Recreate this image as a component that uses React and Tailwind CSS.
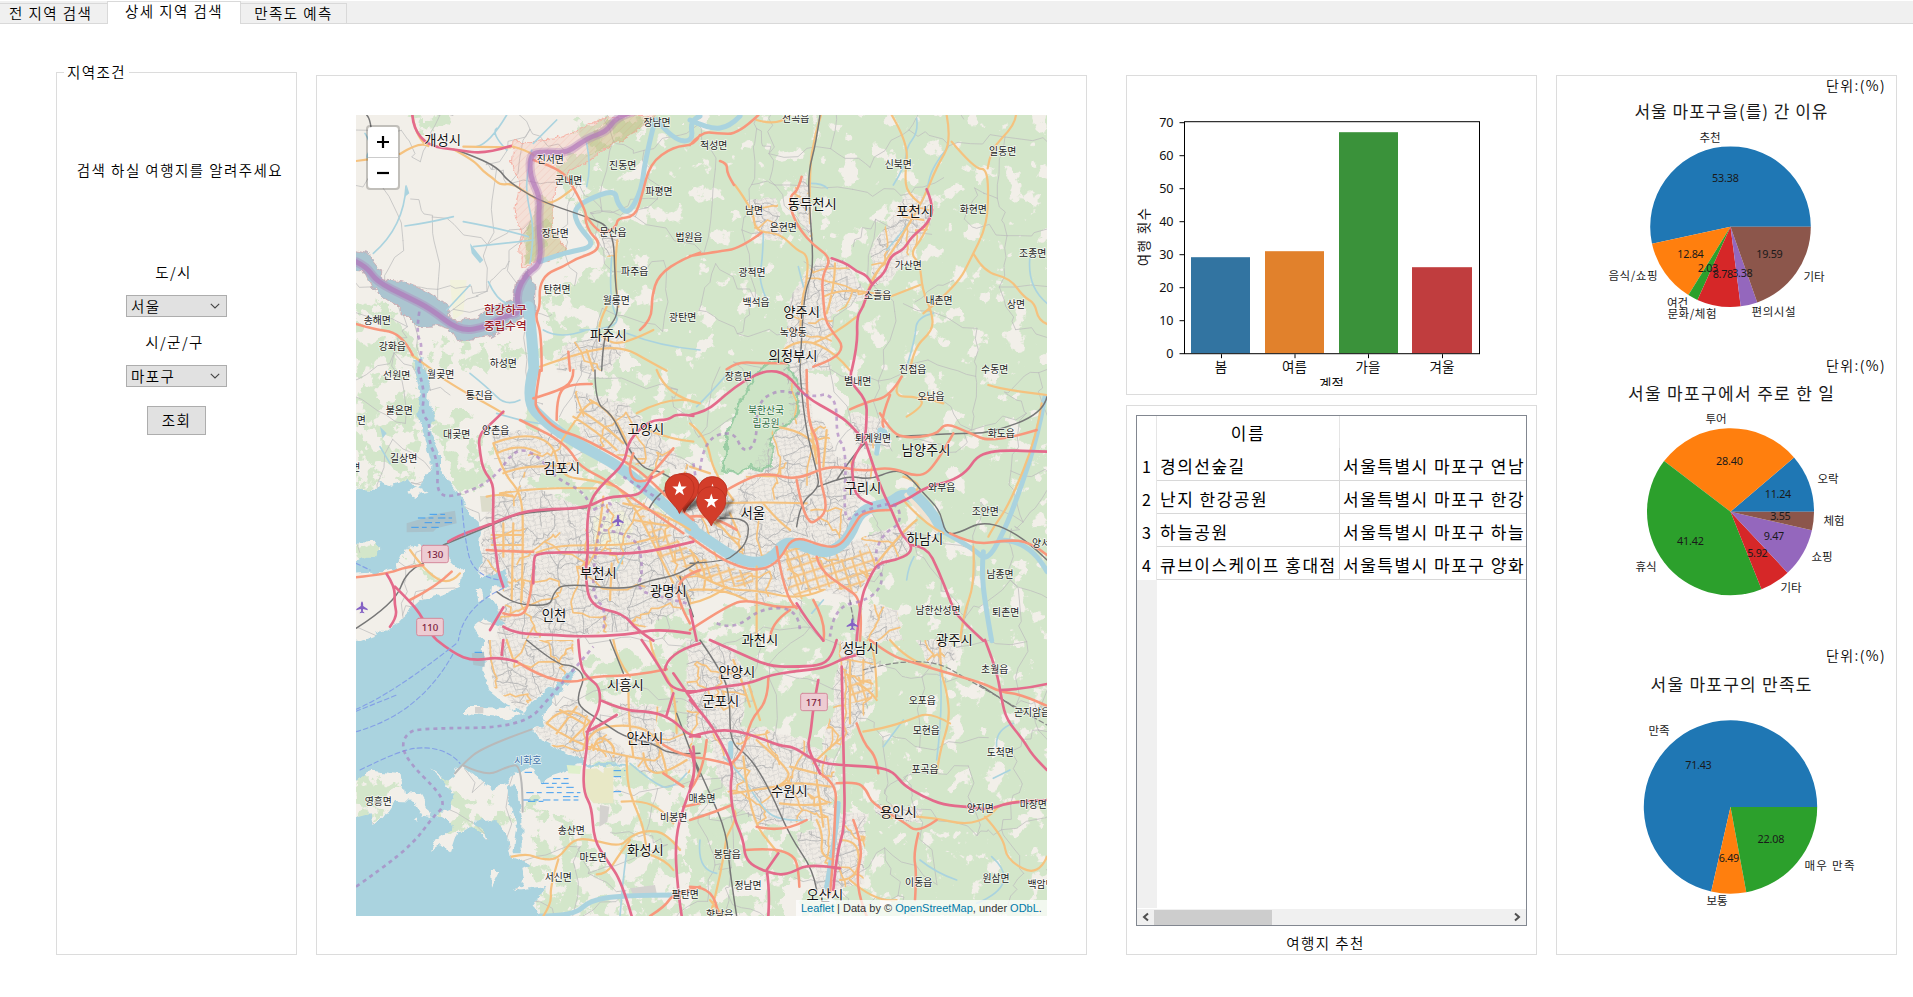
import React from "react";

const KR = '"Noto Sans CJK KR", sans-serif';

/* ---------- map geometry ----------
   Map data is stored per tile at triple resolution; OFFSET places each tile on the sheet. */
const OFFSET = { A: [0, 0], B: [1050, 0], C: [0, 810], D: [1050, 810], E: [0, 1620], F: [1050, 1620] };

function points(tile, str) {
  const [ox, oy] = OFFSET[tile];
  return str.split(" ").map((p) => {
    const [x, y] = p.split(",").map(Number);
    return [x + ox, y + oy];
  });
}

function curve(pts) {
  if (pts.length < 3) return "M" + pts.map((p) => p.join(",")).join("L");
  let d = `M${pts[0]}`;
  for (let i = 1; i < pts.length - 1; i++) {
    const a = pts[i];
    const b = pts[i + 1];
    const end = i === pts.length - 2 ? b : [(a[0] + b[0]) / 2, (a[1] + b[1]) / 2];
    d += `Q${a} ${end}`;
  }
  return d;
}

const lines = (data) =>
  Object.entries(data).map(([t, list]) => list.map((s) => curve(points(t, s))).join("")).join("");
const areas = (data) =>
  Object.entries(data).map(([t, list]) => list.map((s) => "M" + points(t, s).map((p) => p.join(",")).join("L") + "Z").join("")).join("");

const SEA_NORTH = {
  C: [
    "20,355 110,360 122,335 160,347 200,328 215,345 240,345 270,300 272,272 255,212 235,130 240,62 225,0 220,-30 250,-30 255,0 270,40 264,100 286,150 270,182 300,250 300,290 330,340 372,392 392,430 416,450 420,490 412,540 425,560 420,622 500,600 500,650 450,648 446,680 482,722 490,762 470,770 430,745 400,770 430,812 430,850 20,850",
    "20,612 130,606 165,598 182,560 200,530 240,525 320,560 367,605 360,650 300,677 240,692 205,722 170,760 120,790 60,812 20,820",
    "20,520 105,515 125,535 112,562 80,560 20,580",
    "205,362 230,345 272,365 240,372 225,388",
    "410,655 425,650 432,690 415,700",
  ],
};
const SEA_SOUTH = {
  E: [
    "20,-1 432,-1 430,100 450,150 540,222 572,190 650,130 700,85 712,96 640,180 605,228 612,252 576,268 600,296 680,340 745,367 860,372 862,380 720,376 640,402 600,430 590,395 562,382 520,402 500,432 512,495 532,560 520,640 548,640 547,540 526,432 512,440 500,430 455,450 400,402 368,376 345,392 344,410 318,425 300,405 270,388 318,430 340,462 328,508 292,520 332,552 330,572 290,600 272,630 300,612 332,640 352,580 402,560 442,604 430,570 400,542 468,538 500,592 512,650 545,664 572,678 550,690 556,720 522,750 622,738 580,800 612,850 20,850",
    "20,438 95,392 182,402 192,460 240,467 278,534 250,530 222,482 165,480 130,532 98,558 92,520 20,540",
    "375,201 435,201 540,206 548,222 510,236 440,230 375,222",
    "450,690 478,690 468,710 453,740", "218,540 232,532 232,546",
  ],
};
const NEUTRAL = { A: ["30,450 85,460 125,510 125,540 190,545 250,570 310,610 350,665 400,660 440,630 520,600 525,560 560,505 585,560 585,645 540,660 450,710 350,722 330,690 290,678 230,680 160,610 100,570 70,510 30,505"] };
const DMZ = { A: ["520,125 570,125 640,120 720,90 800,50 950,45 900,90 800,140 740,190 690,210 640,260 640,400 680,450 600,490 545,500 540,400 525,330 540,250 515,190"] };
const RIVER_WIDE = {
  A: ["565,620 578,720 582,812"],
  C: ["582,-5 555,90 620,160 700,215 850,295 950,385 1060,475"],
  D: ["0,475 60,515 130,562 200,582 250,562 290,508 380,545 430,545 480,500 510,420 600,400 640,368 700,400 750,480"],
};
const RIVER = {
  A: ["600,485 670,458 770,440 715,380 700,330 740,300 825,268 832,312 865,345 905,270 915,180 945,60", "950,60 1000,120 1060,125 1050,60 1080,48"],
  B: ["0,60 60,88 120,80 150,48"],
  D: ["765,488 850,535 890,575 940,490 990,360 1045,190 1065,80", "880,545 875,600 885,700 905,812", "930,510 1020,510 1071,605", "570,180 560,250"],
  E: ["600,828 700,828 750,780 860,765 1010,765"],
  F: ["445,490 440,570 410,740", "122,310 122,350"],
};
const STREAM = {
  A: ["470,85 452,100 500,150", "198,258 192,380 100,460", "195,378 260,370 340,350", "370,365 480,385 565,410", "575,150 560,230 560,290 585,400 570,490", "500,45 450,130 410,140", "740,130 755,200 740,260", "580,420 400,440", "390,555 320,630", "445,545 470,600 500,610", "815,470 805,600 850,690 720,690", "610,690 660,720 740,690", "860,700 960,740 1080,750", "650,60 580,130", "75,100 100,140 70,180 120,210"],
  B: ["220,400 218,480 205,540 230,600", "680,55 685,95 650,140 645,200 610,255", "775,140 725,200 710,280 660,370 590,450", "1020,470 1010,560 1071,610", "360,250 400,250 412,265", "730,640 680,650 675,720 650,800", "325,500 340,560"],
  C: ["390,10 440,50 500,110 540,90", "120,230 150,280", "470,130 600,170 640,160", "850,560 820,620"],
  D: ["650,630 655,590 672,560", "20,110 90,40 120,0", "365,730 400,690"],
  E: ["870,370 940,430 1000,450 1040,400", "840,830 850,700 860,640"],
  F: ["100,350 160,410 200,480 260,545 345,540", "750,90 760,200 740,360", "690,660 740,700 800,720", "905,650 950,690 930,760 860,790", "910,415 960,390", "580,320 640,240", "970,250 915,270 920,320", "30,600 20,690 80,700"],
};
const MOTORWAY = {
  A: ["217,45 220,85 265,138 350,150 440,162 512,138"],
  B: ["710,268 732,320 715,370 665,410 640,450 600,468 585,520 540,555 520,620 500,650 503,735 485,812", "425,475 470,490 500,515 530,525 545,550"],
  C: ["1060,138 1010,130 985,150 930,150 865,210 855,280 790,340 750,390 740,470 745,540 735,610 750,710 850,730 890,780 940,812", "490,125 460,155 415,195 420,250 430,300 460,340 460,400 458,480 470,560 475,610 490,650", "325,515 350,498 460,460 530,430 600,418 740,415 800,380 880,378 910,365 935,320", "580,640 580,570 590,548 740,546 850,553 960,540 1060,515", "165,650 205,690 240,730 270,790 292,812", "140,612 165,650 163,700 172,740 150,770", "490,770 520,790 640,795 720,800 860,795 960,775 1050,790", "490,712 450,780"],
  D: ["485,0 475,30 530,90 530,150 525,210 485,270 488,330 500,385 545,402", "525,210 550,290 580,370 600,410 625,470 640,500 665,525 660,550 620,570 565,578 540,620 510,690 500,812", "0,135 50,125 105,75 165,30 230,0 290,10 345,80 435,130 480,160 525,215", "600,410 650,390 710,350 780,335 830,305 860,260 900,245 960,240 1071,245", "665,525 710,530 745,600 780,690 800,740 880,812", "320,700 350,750 400,812", "0,720 20,812"],
  E: ["290,0 340,40 400,63 480,50 530,65", "490,0 485,45", "715,0 720,80 745,115 780,140 780,210 740,270 742,320 730,390 732,460 755,500 762,600 800,660 845,725 875,828", "780,180 850,212 940,215 1000,240 1050,290 1080,290", "905,0 960,80 1000,160 1080,153", "1000,160 980,225", "1000,100 1080,215", "975,90 980,40 1080,10", "1060,320 1070,400 1030,500 1005,600 1012,740 1025,828", "740,275 770,262 830,225"],
  F: ["0,158 60,145 180,130 240,105 320,93 400,85 460,55 500,45", "60,0 150,40 240,80 330,80 400,75 430,40 440,0", "385,120 370,200 362,280 352,320 375,370 390,400", "455,80 462,380 465,560 440,640 430,750", "0,180 50,235 90,300 130,380 120,440 130,530 160,600 165,650 190,680 260,705 300,700 360,670 450,685", "0,290 70,270 140,272 200,290 270,318 310,320 370,360 430,375 560,380 610,395 640,435 700,470 760,495 830,500 900,510 960,485 1071,480", "885,0 920,90 935,180 950,240 1000,300 1030,350 1071,390", "930,150 1000,148 1071,132", "230,690 240,750 235,828", "0,440 25,380 0,330", "265,640 230,690"],
};
const TRUNK = {
  A: ["1080,105 1065,135 1000,140 930,190 905,290 885,350 832,355 830,380 780,410 740,350", "580,180 660,205 700,260 740,340 735,360 750,400 778,425 770,455 710,475 670,500 620,520 598,560 600,620 585,650 605,700 605,812", "48,672 110,690 160,695 200,730 218,765", "1080,458 1030,475 955,525 935,590 935,660 900,690", "685,755 690,812"],
  B: ["0,135 35,95 80,100 145,103 205,45", "90,183 112,190 110,220 132,255", "0,468 80,455 150,445 215,398", "335,230 325,270 298,290 305,340 330,390 370,435 425,475 395,530 400,600 405,660 430,700 462,740 430,780 370,800", "110,808 140,785 210,790 290,790"],
  C: ["600,0 585,90 590,120 650,180 720,200 850,270 920,320 1000,400 1060,450", "650,150 650,65 700,40 755,42", "580,85 650,65 700,35 700,0", "540,150 600,180 640,200 690,240 720,290 800,330 900,400 1030,490", "580,600 570,700 540,745 490,730", "48,622 140,612 200,590 250,585", "210,690 290,650 335,605", "440,540 520,545 580,545", "1000,235 920,330", "1080,600 1020,620 1010,690 1050,760", "880,250 860,300 900,350 970,305"],
  D: ["110,360 180,320 240,310 320,330 420,285 520,305 600,290 690,325 740,280 790,190", "570,130 600,180 640,205 740,195 765,158 830,185 910,220 1040,180", "350,0 350,150 385,210 390,330 410,400 400,440 345,470 320,330", "780,490 850,525 950,510 1020,515 1071,555", "480,118 530,95 600,80 635,20", "0,440 60,430 140,480", "260,530 270,600 300,700 320,715", "0,780 120,700 180,690 270,715 320,710", "380,560 390,600 460,650 520,690 510,812", "0,500 80,560 160,596 220,600 270,570 310,495 400,530 450,530 490,470 520,420 600,420", "600,75 570,150 580,170", "240,810 240,760 300,720", "370,690 410,760 400,812"],
  E: ["530,65 600,110 700,130 760,108 880,108 980,88", "970,400 1030,440", "930,828 975,800 1000,760 1080,740", "950,300 1000,340 1060,350", "1030,500 1080,490"],
  F: ["540,0 600,45 660,65 760,95 880,130 930,155 1000,165 1071,198", "500,250 520,310 560,350 565,400", "440,430 500,425 530,450 545,490 640,545 685,580 740,540", "685,580 670,640 680,700 675,780", "490,540 520,620 500,700 510,780 530,828", "390,400 440,430 435,520 430,660 420,760", "165,630 240,625 300,640 325,670 328,740", "0,350 60,355 125,375", "0,540 80,515 125,495", "235,110 235,180 180,240 160,340 125,370", "0,740 40,740 80,780 85,828", "200,560 280,580 350,540", "50,300 40,400 0,450"],
};
const PRIMARY = {
  A: ["512,138 560,150 580,165", "370,140 512,142", "217,45 230,120 265,138", "340,148 400,180 430,215 460,235 480,255 520,250 590,300 640,315 695,268", "180,162 240,123 265,138", "48,183 85,178", "800,620 770,680 790,720 850,735 940,690", "600,800 740,750 850,740 930,785 980,812", "740,750 760,812", "832,420 820,520 835,620", "215,765 275,808"],
  B: ["200,60 265,80 300,45", "393,45 375,100 357,215 360,370", "135,255 190,330 195,395 270,400 320,450 355,465 350,550 335,600 330,700", "605,45 655,130 645,220 650,280 690,310", "770,45 785,125 740,200 700,300 640,400 590,480 540,540 520,620", "785,125 855,208 893,205 895,330 880,400 850,460 800,560 700,640", "850,460 880,515 960,535 1000,590 1035,610 1045,660 1071,672", "893,205 900,150 975,75 978,45", "715,370 700,410 660,460 690,490 697,570 725,635 730,690 670,745 660,812", "600,590 690,555", "400,590 440,570 540,575 600,590", "410,640 435,560 435,490", "370,730 440,700 500,650", "280,750 330,710 440,760 480,812", "640,350 700,360"],
  C: ["300,20 370,65 430,95 490,130", "460,220 540,190 640,215 660,320 760,330 830,350", "460,220 490,310 545,370 550,490 545,690", "490,310 540,290 640,290 690,280", "480,370 600,350 770,355", "590,548 640,528 740,525 880,525 950,500", "790,380 780,480 760,560", "830,350 880,400 950,540 1000,640", "770,100 750,90 700,160 660,220", "750,90 830,130 860,220", "920,180 1000,210 1060,215", "890,130 1000,70 1080,100", "950,0 980,80 1080,100", "210,540 260,610 330,645 360,610", "815,580 810,690", "455,495 550,495", "455,525 550,525", "490,460 490,560", "520,460 515,690", "720,120 800,170 850,220", "700,140 780,190 830,240", "470,250 540,215 600,250", "440,380 470,370 520,380", "850,400 960,420 1050,480", "880,450 1000,470"],
  D: ["0,160 50,200 70,310 130,390", "0,290 60,310", "100,400 200,395 350,400", "120,430 150,500", "260,170 380,190 385,260", "895,45 940,60 1071,75", "635,20 600,80 690,80 700,110 650,140", "690,80 760,100", "1055,100 1040,200 960,400 905,480 895,500", "850,530 855,640 820,730 810,812", "560,580 640,480 680,450", "360,150 380,280", "410,180 400,290", "0,600 100,660 200,660 330,690 400,660", "200,590 200,812", "0,660 100,650 170,690", "640,320 700,340 680,360", "640,390 700,460 760,490", "220,400 260,450 300,480", "60,430 100,480 160,540", "0,700 60,690 110,650", "0,540 60,600 40,660"],
  E: ["620,250 680,180 750,245", "620,250 700,310 860,350 930,360", "650,280 710,200", "690,305 750,245", "660,210 730,250", "740,320 745,270 870,250 960,290 980,400", "760,330 770,280 830,320 820,350", "865,140 865,250 880,350", "860,350 860,420 880,490 915,570 920,640", "845,485 900,480 970,510 1000,550", "515,650 560,640 600,658 655,658 700,595 760,600 840,620 870,590 920,570 980,580 1020,630", "655,658 630,740 635,790 610,828", "770,703 800,703 840,640 870,600", "910,340 915,390 970,405 1040,360", "500,0 520,60", "820,0 830,60 870,110", "930,0 940,60 1010,150 1010,280", "920,640 980,660 1000,690"],
  F: ["750,0 750,90 770,150 780,240 750,330 740,400", "520,275 580,265 660,240 720,215 780,250", "100,828 60,780", "680,530 740,535 830,555 900,530 940,480 1071,480", "885,530 940,590 950,660 1045,710 1071,650", "110,590 150,520 130,510", "130,460 260,440 330,425 420,440", "270,490 340,500 410,490", "200,300 290,380 300,420 260,440", "160,350 170,450 200,560 240,610 265,640", "370,370 420,320 460,290", "380,540 400,580 390,650 430,660", "450,600 500,600 510,680 480,720 450,720", "540,0 560,60 560,170", "480,60 480,250", "500,130 540,150 560,180", "520,60 520,130", "110,590 95,700 60,828", "175,130 210,240", "130,60 160,130 180,200", "480,720 560,790 620,780", "600,0 650,60 720,80", "380,420 400,560", "300,380 380,400"],
};
const RAIL = {
  A: ["80,45 95,60 95,120", "350,150 430,180 480,210 500,240 590,300 740,350 820,385 825,540 835,620 825,660 790,700 785,812"],
  B: ["390,45 378,130 355,215 358,310 372,510 345,570 335,700 330,812"],
  C: ["765,0 765,100 815,130 855,220 890,270 920,300 970,305 1060,370", "1010,345 955,360 925,420", "310,525 480,455 550,425 740,413", "470,665 510,700 630,710 640,670 670,640 860,660 930,630 1020,615 1075,575", "1020,620 1060,740", "48,775 165,700 200,600 250,580"],
  D: ["330,0 340,150 385,320 385,355 330,400 320,470", "90,445 175,440 175,510 140,550 100,575 0,580", "385,350 470,315 540,330 610,300 650,310 700,370 750,420 765,490 800,492 885,450 1000,500 1071,570", "440,330 500,240 525,220", "620,200 800,190 900,190 1060,130 1071,80"],
  E: ["560,0 650,75 700,75 735,110 715,160 715,200 780,240 850,290 940,310 990,345 1080,340", "1010,220 1080,410", "810,0 850,100"],
  F: ["30,0 100,100 120,180 120,310 180,350 240,450 300,590 370,690 380,750", "0,330 60,460 110,580 120,700 140,828", "870,135 970,200"],
};
const RAIL_DASHED = { F: ["520,90 700,40 870,140 1071,255"], D: ["480,690 490,750"] };
const BORDER = { A: ["48,485 80,500 110,545 200,590 270,625 360,695 440,680 500,645 540,640 528,580 560,520 605,490 595,360 600,290 570,230 570,160 620,155 680,160 740,115 800,95 830,50 880,35"] };
const PROVINCE = {
  A: ["238,635 228,700 250,740 235,812"],
  C: ["235,0 255,60 245,130 270,160 265,210 295,280 290,375 350,380 460,330 530,230 600,260 640,320 740,370 745,400", "760,420 830,380 780,460 760,600 760,680 800,720 790,780", "790,480 890,490 910,600 890,660 960,680 1040,700", "850,320 960,390", "1060,280 1080,400"],
  D: ["30,300 40,210 130,180 160,250 200,220 200,100 260,60 320,70 380,80 410,70 440,100 440,200 470,240 460,460 500,430 620,390 635,460 580,490 550,560 585,630 540,690 430,710 420,800", "80,760 130,780 220,710 330,720 330,790"],
  E: ["48,740 120,690 220,610 280,530 312,500 300,460 210,370 185,320 200,280 240,265 550,262 640,160 760,20"],
};
const FERRY = {
  C: ["365,390 370,480 400,620 480,630", "490,655 370,710 355,812", "48,580 90,600"],
  E: ["48,208 160,160 350,10", "48,214 170,165", "48,275 240,222 340,40", "60,390 180,330 270,320 340,345 360,370"],
};
const CAUSEWAY = { E: ["345,400 370,370 430,320 575,268", "370,376 440,410 500,380 548,372 548,515"] };
const PARK = { D: ["185,40 215,-5 250,-30 290,-25 325,40 325,130 290,165 245,200 245,290 215,300 180,288 150,315 130,300 100,298 112,232 105,195 132,165 150,90"] };
const DENSE = {
  A: ["640,190 800,150 960,45 1060,45 1060,812 900,812 760,640 660,560 800,470 700,300"],
  B: ["-10,20 1110,20 1110,830 -10,830"],
  C: ["860,0 1060,0 1060,160 900,130", "560,430 720,430 720,540 570,520"],
  D: ["-10,-10 1110,-10 1110,830 600,830 520,600 560,300 420,0 340,0 270,160 100,330 -10,200", "120,700 520,700 480,830 40,830"],
  E: ["900,90 1060,90 1060,340 960,250 880,200"],
  F: ["-10,-20 1110,-20 1110,860 420,860 520,600 480,440 300,330 120,280 -10,160", "0,540 140,520 200,640 160,740 0,780", "160,550 250,620 330,720 250,690 170,650"],
};
const SPARSE = {
  A: ["30,560 200,660 250,812 30,812", "200,45 330,45 320,90 240,80", "560,350 640,350 650,470 560,490", "600,560 800,560 860,812 620,812", "270,720 560,740 540,812 280,812", "700,60 980,45 820,210 700,230"],
  C: ["30,0 220,0 250,260 200,330 30,360", "270,120 420,120 460,320 380,390 300,270", "560,120 760,180 1060,340 1060,500 560,440", "540,350 720,350 740,480 560,500", "180,560 330,600 260,640", "720,0 1060,0 1060,300 880,260", "860,610 1060,640 1060,812 780,780", "30,510 130,510 130,580 30,580"],
  E: ["560,480 760,580 860,850 600,850", "760,330 1060,330 1060,850 860,850 860,600 780,560", "290,420 520,520 500,600 300,560", "30,400 190,400 160,540 30,540", "720,60 1060,0 1060,300 760,200"],
  F: ["0,300 500,300 500,850 0,850"],
};
const URBAN = {
  A: ["650,780 680,730 840,700 860,750 800,812 650,812", "780,400 840,400 830,470 800,470"],
  B: ["300,590 380,480 460,480 540,590 430,640 420,812 280,812", "650,280 730,290 720,380 600,540 550,560 540,450", "310,270 350,210 370,430 330,360", "170,300 260,290 280,420 200,410"],
  C: ["450,380 560,340 740,420 880,380 1060,480 1060,700 900,780 480,812 450,730 520,690 420,600 430,480", "700,60 860,100 960,200 1060,300 900,290 720,200", "450,180 640,180 720,300 500,330", "420,520 560,450 620,540 600,700 500,650"],
  D: ["-20,300 130,380 180,300 260,160 400,150 440,260 560,290 500,420 470,520 600,470 680,460 660,540 560,600 480,690 400,660 300,660 200,710 100,660 -20,690", "480,130 600,150 600,230 500,240", "290,0 350,0 370,160 300,160", "540,700 620,720 640,812 520,812"],
  E: ["440,0 700,0 700,80 650,125 570,185 540,210 460,140", "580,270 700,170 760,250 880,350 860,370 740,360 640,320", "860,290 1060,270 1050,400 900,400", "840,190 960,200 940,290 850,260"],
  F: ["60,280 200,260 340,300 430,360 440,470 380,540 210,560 140,500 80,400", "450,0 550,60 550,180 500,260 440,330 390,330 430,200", "-10,-5 130,20 180,120 140,330 60,300 -10,260", "370,520 530,520 520,730 380,760", "320,580 430,560 430,680 330,650", "680,0 780,0 800,60 720,80", "550,490 700,510 690,550 560,530"],
};
const AVENUES = { D: ["285,530 330,535 385,570 440,570 490,560 530,520 560,580 500,670 410,650 330,690 295,660"] };
const AVENUES_SOUTH = { F: ["470,100 545,120 545,180 480,190"], D: ["0,550 90,585 190,610 190,650 100,650 0,610"], C: ["890,420 1000,500 1050,540 1050,600 960,560"] };
const RESERVOIR = { A: ["390,430 430,480 420,490 395,460", "200,255 208,280 195,290"], C: ["120,170 140,190 128,205"], D: ["570,170 590,180 600,205 575,200"] };

/* Minor road mesh: jittered nodes joined by wandering segments. */
function makeRandom(seed) {
  let s = seed;
  return () => {
    s = (s * 1664525 + 1013904223) % 4294967296;
    return s / 4294967296;
  };
}
function mesh(seed, step, keep) {
  const rnd = makeRandom(seed);
  const cols = Math.ceil(2200 / step);
  const rows = Math.ceil(2560 / step);
  const nodes = [];
  for (let r = 0; r <= rows; r++) {
    nodes.push([]);
    for (let c = 0; c <= cols; c++) nodes[r].push([c * step + (rnd() - 0.5) * step, r * step + (rnd() - 0.5) * step]);
  }
  let d = "";
  const join = (a, b) => {
    let seg = `M${a[0].toFixed(0)},${a[1].toFixed(0)}`;
    for (let i = 1; i < 5; i++) {
      const t = i / 5;
      seg += `L${(a[0] + (b[0] - a[0]) * t + (rnd() - 0.5) * step * 0.22).toFixed(0)},${(a[1] + (b[1] - a[1]) * t + (rnd() - 0.5) * step * 0.22).toFixed(0)}`;
    }
    return seg + `L${b[0].toFixed(0)},${b[1].toFixed(0)}`;
  };
  for (let r = 0; r < rows; r++)
    for (let c = 0; c < cols; c++) {
      if (rnd() < keep) d += join(nodes[r][c], nodes[r][c + 1]);
      if (rnd() < keep) d += join(nodes[r][c], nodes[r + 1][c]);
    }
  return d;
}
const RURAL_ROADS = mesh(11, 135, 0.56);
const CITY_ROADS = mesh(5, 42, 0.6);
const CITY_MAIN = mesh(29, 80, 0.46);

const CITIES = [
  ["A", 308, 122, "개성시"], ["A", 805, 707, "파주시"], ["B", 367, 312, "동두천시"], ["B", 674, 334, "포천시"], ["B", 335, 638, "양주시"], ["B", 309, 768, "의정부시"],
  ["C", 918, 179, "고양시"], ["C", 665, 296, "김포시"], ["C", 775, 611, "부천시"], ["C", 985, 665, "광명시"], ["C", 642, 735, "인천"],
  ["D", 188, 431, "서울"], ["D", 519, 356, "구리시"], ["D", 708, 241, "남양주시"], ["D", 705, 507, "하남시"], ["D", 210, 812, "과천시"], ["D", 793, 811, "광주시"],
  ["E", 856, 135, "시흥시"], ["E", 915, 295, "안산시"], ["E", 916, 631, "화성시"],
  ["F", 511, 24, "성남시"], ["F", 141, 97, "안양시"], ["F", 93, 185, "군포시"], ["F", 298, 455, "수원시"], ["F", 625, 518, "용인시"], ["F", 405, 766, "오산시"],
];
const TOWNS = [
  ["A", 951, 67, "장남면"], ["A", 631, 178, "진서면"], ["A", 848, 195, "진동면"], ["A", 686, 240, "군내면"], ["A", 957, 273, "파평면"], ["A", 646, 401, "장단면"], ["A", 819, 397, "문산읍"], ["A", 1047, 413, "법원읍"], ["A", 884, 514, "파주읍"], ["A", 651, 569, "탄현면"], ["A", 829, 601, "월롱면"], ["A", 1028, 652, "광탄면"], ["A", 112, 662, "송해면"], ["A", 157, 739, "강화읍"], ["A", 490, 790, "하성면"],
  ["B", 317, 56, "전곡읍"], ["B", 71, 136, "적성면"], ["B", 625, 192, "신북면"], ["B", 938, 153, "일동면"], ["B", 192, 332, "남면"], ["B", 280, 382, "은현면"], ["B", 850, 327, "화현면"], ["B", 1028, 461, "조종면"], ["B", 186, 517, "광적면"], ["B", 655, 496, "가산면"], ["B", 563, 585, "소흘읍"], ["B", 198, 607, "백석읍"], ["B", 747, 601, "내촌면"], ["B", 978, 612, "상면"], ["B", 310, 697, "녹양동"], ["B", 668, 807, "진접읍"], ["B", 914, 807, "수동면"],
  ["C", 170, 15, "선원면"], ["C", 302, 12, "월곶면"], ["C", 418, 77, "통진읍"], ["C", 178, 121, "불은면"], ["C", 467, 181, "양촌읍"], ["C", 350, 194, "대곶면"], ["C", 191, 265, "길상면"], ["C", 64, 152, "면"], ["C", 47, 292, "면"],
  ["D", 145, 19, "장흥면"], ["D", 503, 35, "별내면"], ["D", 723, 78, "오남읍"], ["D", 549, 204, "퇴계원면"], ["D", 934, 190, "화도읍"], ["D", 755, 352, "와부읍"], ["D", 886, 423, "조안면"], ["D", 1067, 520, "양서면"], ["D", 930, 612, "남종면"], ["D", 744, 720, "남한산성면"], ["D", 947, 727, "퇴촌면"],
  ["E", 115, 483, "영흥면"], ["E", 694, 571, "송산면"], ["E", 759, 652, "마도면"], ["E", 655, 713, "서신면"], ["E", 1001, 531, "비봉면"], ["E", 1036, 763, "팔탄면"],
  ["F", 36, 475, "매송면"], ["F", 914, 88, "초월읍"], ["F", 697, 181, "오포읍"], ["F", 1026, 217, "곤지암읍"], ["F", 709, 271, "모현읍"], ["F", 931, 337, "도척면"], ["F", 705, 387, "포곡읍"], ["F", 871, 505, "양지면"], ["F", 1030, 492, "마장면"], ["F", 112, 643, "봉담읍"], ["F", 174, 737, "정남면"], ["F", 686, 728, "이동읍"], ["F", 918, 714, "원삼면"], ["F", 1053, 734, "백암면"], ["F", 89, 822, "향남읍"],
];

function MapLabels({ items, size, fill, weight = 400 }) {
  return (
    <g fontFamily={KR} fontSize={size} fontWeight={weight} textAnchor="middle" letterSpacing="0" strokeLinejoin="round">
      {items.map(([t, x, y, s], i) => (
        <g key={i}>
          <text x={x + OFFSET[t][0]} y={y + OFFSET[t][1] + size * 0.36} fill={fill} stroke="#fff" strokeOpacity="0.7" strokeWidth="5" paintOrder="stroke">{s}</text>
        </g>
      ))}
    </g>
  );
}

function Shield({ x, y, n }) {
  return (
    <g>
      <rect x={x - 40} y={y - 26} width="80" height="52" rx="6" fill="#edccd3" stroke="#d48a9c" strokeWidth="3" />
      <text x={x} y={y + 11} textAnchor="middle" letterSpacing="0" fontWeight="500" fontFamily='"Noto Sans", sans-serif' fontSize="29" fill="#7c2340">{n}</text>
    </g>
  );
}

function Plane({ x, y }) {
  return (
    <path transform={`translate(${x} ${y})`} fill="#8461c4" d="M0,-18 Q3.5,-15 3.5,-9 V-4 L17,5 V9 L3.5,5 L2.5,12 L7,16 V18 L0,16.5 L-7,18 V16 L-2.5,12 L-3.5,5 L-17,9 V5 L-3.5,-4 V-9 Q-3.5,-15 0,-18Z" />
  );
}

function Pin({ x, y, star = true }) {
  return (
    <g transform={`translate(${x} ${y})`}>
      <path d="M0,0 Q8,-14 22,-17 Q20,-7 0,0Z" fill="#000" opacity="0.35" filter="url(#soft)" />
      <path d="M0,0 C-3,-8 -14.6,-14 -14.6,-25.5 A14.6,14 0 0 1 14.6,-25.5 C14.6,-14 3,-8 0,0Z" fill="#d33d2a" stroke="#b9301f" strokeWidth="0.8" />
      {star && <path fill="#fff" d="M0,-32.5 L1.8,-27 L7.2,-27 L2.9,-23.6 L4.5,-18.3 L0,-21.5 L-4.5,-18.3 L-2.9,-23.6 L-7.2,-27 L-1.8,-27Z" />}
    </g>
  );
}

function MapCanvas() {
  return (
    <svg className="block" width="691" height="801" viewBox="356 115 691 801">
      <defs>
        <filter id="dense" x="0" y="0" width="100%" height="100%" colorInterpolationFilters="sRGB">
          <feTurbulence type="fractalNoise" baseFrequency="0.016" numOctaves="5" seed="4" result="n" />
          <feColorMatrix in="n" type="matrix" values="0 0 0 0 0 0 0 0 0 0 0 0 0 0 0 24 0 0 0 -8.1" result="m" />
          <feDisplacementMap in="SourceGraphic" in2="n" scale="90" xChannelSelector="G" yChannelSelector="B" result="s" />
          <feComposite in="s" in2="m" operator="in" />
        </filter>
        <filter id="sparse" x="0" y="0" width="100%" height="100%" colorInterpolationFilters="sRGB">
          <feTurbulence type="fractalNoise" baseFrequency="0.018" numOctaves="5" seed="9" result="n" />
          <feColorMatrix in="n" type="matrix" values="0 0 0 0 0 0 0 0 0 0 0 0 0 0 0 26 0 0 0 -12.2" result="m" />
          <feDisplacementMap in="SourceGraphic" in2="n" scale="90" xChannelSelector="G" yChannelSelector="B" result="s" />
          <feComposite in="s" in2="m" operator="in" />
        </filter>
        <filter id="rough" x="-2%" y="-2%" width="104%" height="104%">
          <feTurbulence type="fractalNoise" baseFrequency="0.03" numOctaves="4" seed="2" result="n" />
          <feDisplacementMap in="SourceGraphic" in2="n" scale="26" xChannelSelector="R" yChannelSelector="G" />
        </filter>
        <filter id="soft" x="-50%" y="-50%" width="200%" height="200%"><feGaussianBlur stdDeviation="1.2" /></filter>
        <pattern id="blocks" width="17" height="15" patternUnits="userSpaceOnUse" patternTransform="rotate(-12)">
          <path d="M0,0H17M0,0V15" stroke="#b8b8b8" strokeWidth="3" fill="none" />
        </pattern>
        <pattern id="avenues" width="30" height="26" patternUnits="userSpaceOnUse" patternTransform="rotate(-18)">
          <path d="M0,13H30M15,0V26" stroke="#f5c27f" strokeWidth="5.5" fill="none" />
        </pattern>
        <pattern id="hatch" width="16" height="16" patternUnits="userSpaceOnUse" patternTransform="rotate(45)">
          <path d="M0,0V16" stroke="#e8685a" strokeWidth="1.6" opacity="0.35" />
        </pattern>
        <clipPath id="cityClip"><path d={areas(URBAN)} /></clipPath>
      </defs>
      <rect x="356" y="115" width="691" height="801" fill="#f2efe9" />
      <g transform="translate(340 100) scale(0.333333)" fill="none" strokeLinecap="round" strokeLinejoin="round">
        <path d={areas(SPARSE)} fill="#d3e6ca" filter="url(#sparse)" />
        <path d={areas(DENSE)} fill="#d3e6ca" filter="url(#dense)" />
        <path d={areas(URBAN)} fill="#efebe5" filter="url(#rough)" />
        <path d={areas({ C: ["760,440 850,420 880,480 850,530 760,530"], A: ["330,540 380,540 370,640 340,660"] })} fill="#f1f1dc" />
        <path d={RURAL_ROADS} stroke="#bebdbe" strokeWidth="2.3" />
        <path d={areas(PARK)} fill="#cde4c6" filter="url(#rough)" />
        <g clipPath="url(#cityClip)">
          <path d={areas(URBAN)} fill="url(#blocks)" opacity="0.6" filter="url(#rough)" />
          <path d={CITY_ROADS} stroke="#b9b9b9" strokeWidth="3" />
          <path d={CITY_MAIN} stroke="#f5c27f" strokeWidth="5" />
        </g>
        <path d={areas({ C: ["420,378 455,378 455,425 425,425", "330,500 358,500 358,552 330,552"] })} fill="#dcdccb" />
        <path d={areas(SEA_NORTH)} fill="#aad3df" fillRule="evenodd" filter="url(#rough)" />
        <path d="M200,1616H420V1660H120Z" fill="#aad3df" />
        <path d={areas(SEA_SOUTH)} fill="#aad3df" fillRule="evenodd" filter="url(#rough)" />
        <path d={areas({ C: ["200,460 300,430 345,422 350,460 290,475 280,485 200,487"], E: ["395,40 432,35 434,80 400,75"] })} fill="#a9c2cb" />
        <path d={areas({ E: ["735,388 770,385 790,400 793,384 820,382 820,490 760,490 735,460"] })} fill="#e8e8c6" />
        <path d={areas({ E: ["780,495 808,500 802,545 778,560", "870,745 945,735 950,760 880,765", "405,201 430,201 430,220 405,220"] })} fill="#d4d2cf" />
        <path d={areas({ E: ["680,375 725,378 720,402 685,400"] })} fill="#dff0cc" />
        <g stroke="#3f9df0" strokeWidth="3" strokeDasharray="20 12 12 16">
          <path d="M235,1254H335M255,1268H340M215,1282H300M270,1243H320M405,1657H430" />
          <path d="M605,2050H690M560,2078H720M620,2062H700M550,2100H720M670,2090H725M565,2104H620M822,2012H855M822,2030H850M822,2075H850M555,2017H580M640,2036H700" />
        </g>
        <path d={areas(NEUTRAL)} fill="#abc5d0" stroke="#c9a0a8" strokeWidth="2" filter="url(#rough)" />
        <path d={areas(DMZ)} fill="#ff8066" fillOpacity="0.14" stroke="#f6a79b" strokeWidth="2.5" filter="url(#rough)" />
        <path d={areas(DMZ)} fill="url(#hatch)" />
        <path d={areas({ A: ["600,280 640,320 640,400 680,450 600,490 555,490 560,400", "740,120 800,60 950,45 900,90 800,140 740,170"] })} fill="#a9b868" fillOpacity="0.3" filter="url(#rough)" />
        <path d={lines(STREAM)} stroke="#aad3df" strokeWidth="5" />
        <path d={areas(RESERVOIR)} fill="#aad3df" />
        <path d={lines(RIVER)} stroke="#aad3df" strokeWidth="15" />
        <path d={lines(RIVER_WIDE)} stroke="#aad3df" strokeWidth="33" />
        <path d={lines({ D: ["650,375 700,430 740,482"] })} stroke="#f1e3d2" strokeWidth="14" />
        <path d={lines({ D: ["665,365 720,410 750,470"] })} stroke="#aad3df" strokeWidth="30" />
        <path d={lines(CAUSEWAY)} stroke="#b9b9b9" strokeWidth="6" />
        <path d={areas(PARK)} stroke="#8cc79a" strokeWidth="7" strokeOpacity="0.8" filter="url(#rough)" />
        <path d={areas(AVENUES)} fill="url(#avenues)" />
        <path d={areas(AVENUES_SOUTH)} fill="url(#avenues)" />
        <path d={lines(PRIMARY)} stroke="#f5c27f" strokeWidth="6.6" />
        <path d={lines(RAIL)} stroke="#777" strokeWidth="4.4" />
        <path d={lines(RAIL_DASHED)} stroke="#888" strokeWidth="3.6" strokeDasharray="14 9" />
        <path d={lines(TRUNK)} stroke="#f8977c" strokeWidth="7.6" />
        <path d={lines(MOTORWAY)} stroke="#e46a8b" strokeWidth="8" />
        <path d={lines(FERRY)} stroke="#84a0e6" strokeWidth="3.4" strokeDasharray="14 9" />
        <path d={lines(PROVINCE)} stroke="#a77cc0" strokeOpacity="0.65" strokeWidth="8" strokeDasharray="12 12" strokeLinecap="butt" />
        <path d={lines(BORDER)} stroke="#b077ba" strokeOpacity="0.35" strokeWidth="27" />
        <path d={lines(BORDER)} stroke="#b077ba" strokeOpacity="0.65" strokeWidth="15" />
        <MapLabels items={TOWNS} size={29.5} fill="#222" />
        <MapLabels items={CITIES} size={40} fill="#111" />
        <MapLabels items={[["A", 496, 629, "한강하구"], ["A", 496, 676, "중립수역"]]} size={35} fill="#9b1c28" weight={500} />
        <MapLabels items={[["D", 228, 122, "북한산국"], ["D", 228, 160, "립공원"]]} size={29.5} fill="#2b6b3d" />
        <MapLabels items={[["E", 563, 361, "시화호"]]} size={29.5} fill="#4072a8" />
        <Shield x={285} y={1362} n="130" />
        <Shield x={270} y={1581} n="110" />
        <Shield x={1422} y={1806} n="171" />
        <Plane x={834} y={1261} />
        <Plane x={66} y={1522} />
        <Plane x={1537} y={1572} />
      </g>
      <Pin x={684.5} y={512.5} star={false} />
      <Pin x={679.5} y={513.5} />
      <Pin x={712.5} y={516} />
      <Pin x={711.3} y={526} />
    </svg>
  );
}

/* ---------- charts ---------- */
function T({ x, y, size, w, anchor = "middle", children }) {
  return (
    <text x={x} y={y + size * 0.36} fontSize={size} textAnchor={anchor} textLength={w} lengthAdjust="spacing">{children}</text>
  );
}

const SEASONS = [
  { x: 1191, w: 59, top: 257, color: "#3274a1", name: "봄", cx: 1221, tw: 12.5 },
  { x: 1265, w: 59, top: 251, color: "#e1812c", name: "여름", cx: 1294.5, tw: 25 },
  { x: 1339, w: 59, top: 132, color: "#3a923a", name: "가을", cx: 1368, tw: 25 },
  { x: 1412, w: 60, top: 267, color: "#c03d3e", name: "겨울", cx: 1442, tw: 25 },
];

function SeasonChart() {
  return (
    <svg className="block font-normal tracking-normal" width="409" height="310" viewBox="1127 76 409 309.6" fontFamily={KR} fill="#111">
      {SEASONS.map((s) => (
        <g key={s.name}>
          <rect x={s.x} y={s.top} width={s.w} height={353 - s.top} fill={s.color} />
          <path d={`M${s.cx + 0.5},354V358`} stroke="#000" />
          <T x={s.cx} y={367} size={13.5} w={s.tw}>{s.name}</T>
        </g>
      ))}
      {[0, 10, 20, 30, 40, 50, 60, 70].map((v, i) => (
        <g key={v}>
          <path d={`M1179.5,${Math.round(353 - i * 33) + 0.5}H1184`} stroke="#000" />
          <text x={1173.5} y={358 - i * 33} fontSize="12.6" textAnchor="end" fontFamily='"Noto Sans", sans-serif' textLength={v ? 14.2 : 7.1}>{v}</text>
        </g>
      ))}
      <rect x="1184.5" y="121.5" width="295" height="232" fill="none" stroke="#000" />
      <text transform="translate(1148.5 237) rotate(-90)" fontSize="13.5" textAnchor="middle" textLength="58">여행 횟수</text>
      <T x={1331.5} y={384} size={13.5} w={25}>계절</T>
    </svg>
  );
}

function Pie({ top, height, cy, r, title, titleY, titleW, slices, labels }) {
  const cx = 1730.5;
  let acc = 0;
  return (
    <svg className="block font-normal tracking-normal" width="339" height={height} viewBox={`1557 ${top} 339 ${height}`} fontFamily={KR} fill="#1a1a1a">
      <T x={1731} y={titleY} size={17} w={titleW}>{title}</T>
      {slices.map(([v, color]) => {
        const a = (acc / 100) * 2 * Math.PI;
        acc += v;
        const b = (acc / 100) * 2 * Math.PI;
        return (
          <path key={color} fill={color} d={`M${cx},${cy}L${cx + r * Math.cos(a)},${cy - r * Math.sin(a)}A${r},${r} 0 ${v > 50 ? 1 : 0} 0 ${cx + r * Math.cos(b)},${cy - r * Math.sin(b)}Z`} />
        );
      })}
      {labels.map(([s, x, y, w]) => {
        const numeric = /^\d/.test(s);
        return (
          <text key={s} x={x} y={y + 4} fontSize={numeric ? 10.8 : 11.5} fontFamily={numeric ? '"Noto Sans", sans-serif' : KR} textAnchor="middle" textLength={w}>{s}</text>
        );
      })}
    </svg>
  );
}

const BLUE = "#1f77b4", ORANGE = "#ff7f0e", GREEN = "#2ca02c", RED = "#d62728", PURPLE = "#9467bd", BROWN = "#8c564b";

const Unit = () => (
  <div className="flex h-[22px] justify-end pr-[10px] text-[14px] leading-[18px] tracking-[1.4px]">단위:(%)</div>
);

/* ---------- controls ---------- */
function Select({ value }) {
  return (
    <div className="flex h-[22px] w-[101px] items-center justify-between border border-[#adadad] bg-[#e1e1e1] pl-1 pr-[6px]">
      <span className="leading-none">{value}</span>
      <svg width="10" height="6" viewBox="0 0 10 6" fill="none" stroke="#444" strokeWidth="1.1"><path d="M0.8,0.8L5,5L9.2,0.8" /></svg>
    </div>
  );
}

const PLACES = [
  ["경의선숲길", "서울특별시 마포구 연남"],
  ["난지 한강공원", "서울특별시 마포구 한강"],
  ["하늘공원", "서울특별시 마포구 하늘"],
  ["큐브이스케이프 홍대점", "서울특별시 마포구 양화"],
];

export default function App() {
  return (
    <div className="h-[997px] w-[1913px] overflow-hidden bg-white pt-px font-['Noto_Sans_CJK_KR',sans-serif] text-[14.5px] font-[350] tracking-[1.45px] text-black">
      <nav className="flex h-[23px] items-end border-b border-[#d9d9d9] bg-[#f0f0f0]">
        <div className="flex h-[20px] w-[107px] items-center whitespace-nowrap border-t border-[#d9d9d9] pb-px pl-[9px] leading-none">전 지역 검색</div>
        <div className="-mb-px flex h-[23px] w-[134px] items-center justify-center whitespace-nowrap border-x border-t border-[#d9d9d9] bg-white pb-[3px] leading-none">상세 지역 검색</div>
        <div className="flex h-[20px] w-[106px] items-center justify-center whitespace-nowrap border-r border-t border-[#d9d9d9] pb-px leading-none">만족도 예측</div>
      </nav>

      <main className="flex items-start pl-[56px] pt-[51px]">
        <section className="-mt-[3px] flex h-[883px] w-[241px] flex-col items-center border border-[#dcdcdc]">
          <h2 className="-mt-[12px] ml-[7px] h-[22px] w-[65px] self-start whitespace-nowrap bg-white pl-[3px] leading-[22px]">지역조건</h2>
          <p className="mt-[76px] h-[22px] whitespace-nowrap pl-[7px] leading-[22px]">검색 하실 여행지를 알려주세요</p>
          <label className="mr-[6px] mt-[80px] h-[22px] leading-[22px]">도/시</label>
          <div className="mt-[12px]"><Select value="서울" /></div>
          <label className="mr-[4px] mt-[14px] h-[22px] leading-[22px]">시/군/구</label>
          <div className="mt-[12px]"><Select value="마포구" /></div>
          <button className="mt-[19px] flex h-[29px] w-[59px] items-center justify-center border border-[#adadad] bg-[#e1e1e1] leading-none">조회</button>
        </section>

        <section className="ml-[19px] h-[880px] w-[771px] border border-[#dcdcdc] pl-[39px] pt-[39px]">
          <div className="relative h-[801px] w-[691px] overflow-hidden">
            <MapCanvas />
            <div className="absolute left-[10px] top-[10px] flex w-[34px] flex-col rounded border-2 border-black/20 bg-clip-padding">
              <span className="flex h-[31px] items-center justify-center rounded-t-sm border-b border-[#ccc] bg-white">
                <svg width="14" height="14" viewBox="0 0 14 14" stroke="#000" strokeWidth="2.2"><path d="M1,7H13M7,1V13" /></svg>
              </span>
              <span className="flex h-[30px] items-center justify-center rounded-b-sm bg-white">
                <svg width="14" height="14" viewBox="0 0 14 14" stroke="#000" strokeWidth="2.2"><path d="M1,7H13" /></svg>
              </span>
            </div>
            <div className="absolute bottom-0 right-0 h-[16px] w-[251px] whitespace-nowrap bg-white/70 pl-[5px] font-['Liberation_Sans',sans-serif] text-[11px] font-normal leading-[16px] tracking-normal text-[#333]">
              <span className="text-[#0078a8]">Leaflet</span> | Data by © <span className="text-[#0078a8]">OpenStreetMap</span>, under <span className="text-[#0078a8]">ODbL</span>.
            </div>
          </div>
        </section>

        <div className="ml-[39px] flex w-[411px] flex-col gap-[10px]">
          <section className="h-[320px] border border-[#dcdcdc]"><SeasonChart /></section>
          <section className="flex h-[550px] flex-col border border-[#dcdcdc] px-[9px] pt-[9px]">
            <div className="flex h-[511px] w-[391px] shrink-0 flex-col overflow-hidden border border-[#828790] text-[17px] font-normal tracking-[1.5px]">
              <div className="flex h-[32px]">
                <div className="w-[20px] border-r border-[#e5e5e5]" />
                <div className="flex w-[183px] items-center justify-center border-r border-[#e5e5e5] leading-none">이름</div>
              </div>
              {PLACES.map(([name, address], i) => (
                <div key={name} className="flex h-[33px] whitespace-nowrap leading-[36px]">
                  <div className="w-[20px] border-r border-[#e5e5e5] text-center text-[16px] tracking-normal">{i + 1}</div>
                  <div className="h-[33px] w-[183px] border-b border-r border-[#d8d8d8] pl-[3px]">{name}</div>
                  <div className="h-[33px] w-[186px] overflow-hidden border-b border-[#d8d8d8] pl-[3px]">{address}</div>
                </div>
              ))}
              <div className="w-[20px] flex-1 bg-[#f0f0f0]" />
              <div className="mt-px flex h-[16px] items-center bg-[#f0f0f0]">
                <svg className="w-[17px]" width="17" height="16" viewBox="0 0 17 16" fill="none" stroke="#505050" strokeWidth="2"><path d="M11,4.5L7,8L11,11.5" /></svg>
                <div className="h-[15px] w-[118px] bg-[#cdcdcd]" />
                <svg className="ml-auto" width="17" height="16" viewBox="0 0 17 16" fill="none" stroke="#505050" strokeWidth="2"><path d="M6,4.5L10,8L6,11.5" /></svg>
              </div>
            </div>
            <p className="mr-[12px] h-[28px] text-center leading-[33px]">여행지 추천</p>
          </section>
        </div>

        <section className="ml-[19px] h-[880px] w-[341px] border border-[#dcdcdc]">
          <Unit />
          <Pie
            top={98} height={258} cy={226.7} r={80.3} title="서울 마포구을(를) 간 이유" titleY={111.5} titleW={193}
            slices={[[53.38, BLUE], [12.84, ORANGE], [2.03, GREEN], [8.78, RED], [3.38, PURPLE], [19.59, BROWN]]}
            labels={[["추천", 1710, 137.5, 21], ["음식/쇼핑", 1633, 276, 49], ["여건", 1677.5, 302.5, 21], ["문화/체험", 1692, 314, 49], ["편의시설", 1773.5, 312, 44], ["기타", 1814, 277, 21], ["53.38", 1725.5, 178, 27], ["12.84", 1690.5, 254, 26.5], ["2.03", 1708, 268, 20.5], ["8.78", 1723, 274, 20.5], ["3.38", 1742.5, 273, 20.5], ["19.59", 1769.5, 254, 26.5]]}
          />
          <Unit />
          <Pie
            top={378} height={268} cy={511.7} r={83.5} title="서울 마포구에서 주로 한 일" titleY={393.5} titleW={206}
            slices={[[11.24, BLUE], [28.4, ORANGE], [41.42, GREEN], [5.92, RED], [9.47, PURPLE], [3.55, BROWN]]}
            labels={[["투어", 1716, 418.5, 21], ["오락", 1828, 478.5, 21], ["체험", 1834, 520.5, 21], ["쇼핑", 1822, 556.5, 21], ["기타", 1791, 587.5, 21], ["휴식", 1646, 567, 21], ["28.40", 1729.5, 461, 27], ["11.24", 1778, 494, 26.5], ["3.55", 1780.5, 516, 20.5], ["9.47", 1774, 536, 20.5], ["5.92", 1757.5, 553, 20.5], ["41.42", 1690.5, 541, 27]]}
          />
          <Unit />
          <Pie
            top={668} height={280} cy={807} r={86.7} title="서울 마포구의 만족도" titleY={684.5} titleW={161}
            slices={[[71.43, BLUE], [6.49, ORANGE], [22.08, GREEN]]}
            labels={[["만족", 1659, 730.5, 21], ["보통", 1717, 901, 21], ["매우 만족", 1829.5, 865.5, 50], ["71.43", 1698.5, 765, 26.5], ["6.49", 1729, 858, 20.5], ["22.08", 1771, 839, 27]]}
          />
        </section>
      </main>
    </div>
  );
}
